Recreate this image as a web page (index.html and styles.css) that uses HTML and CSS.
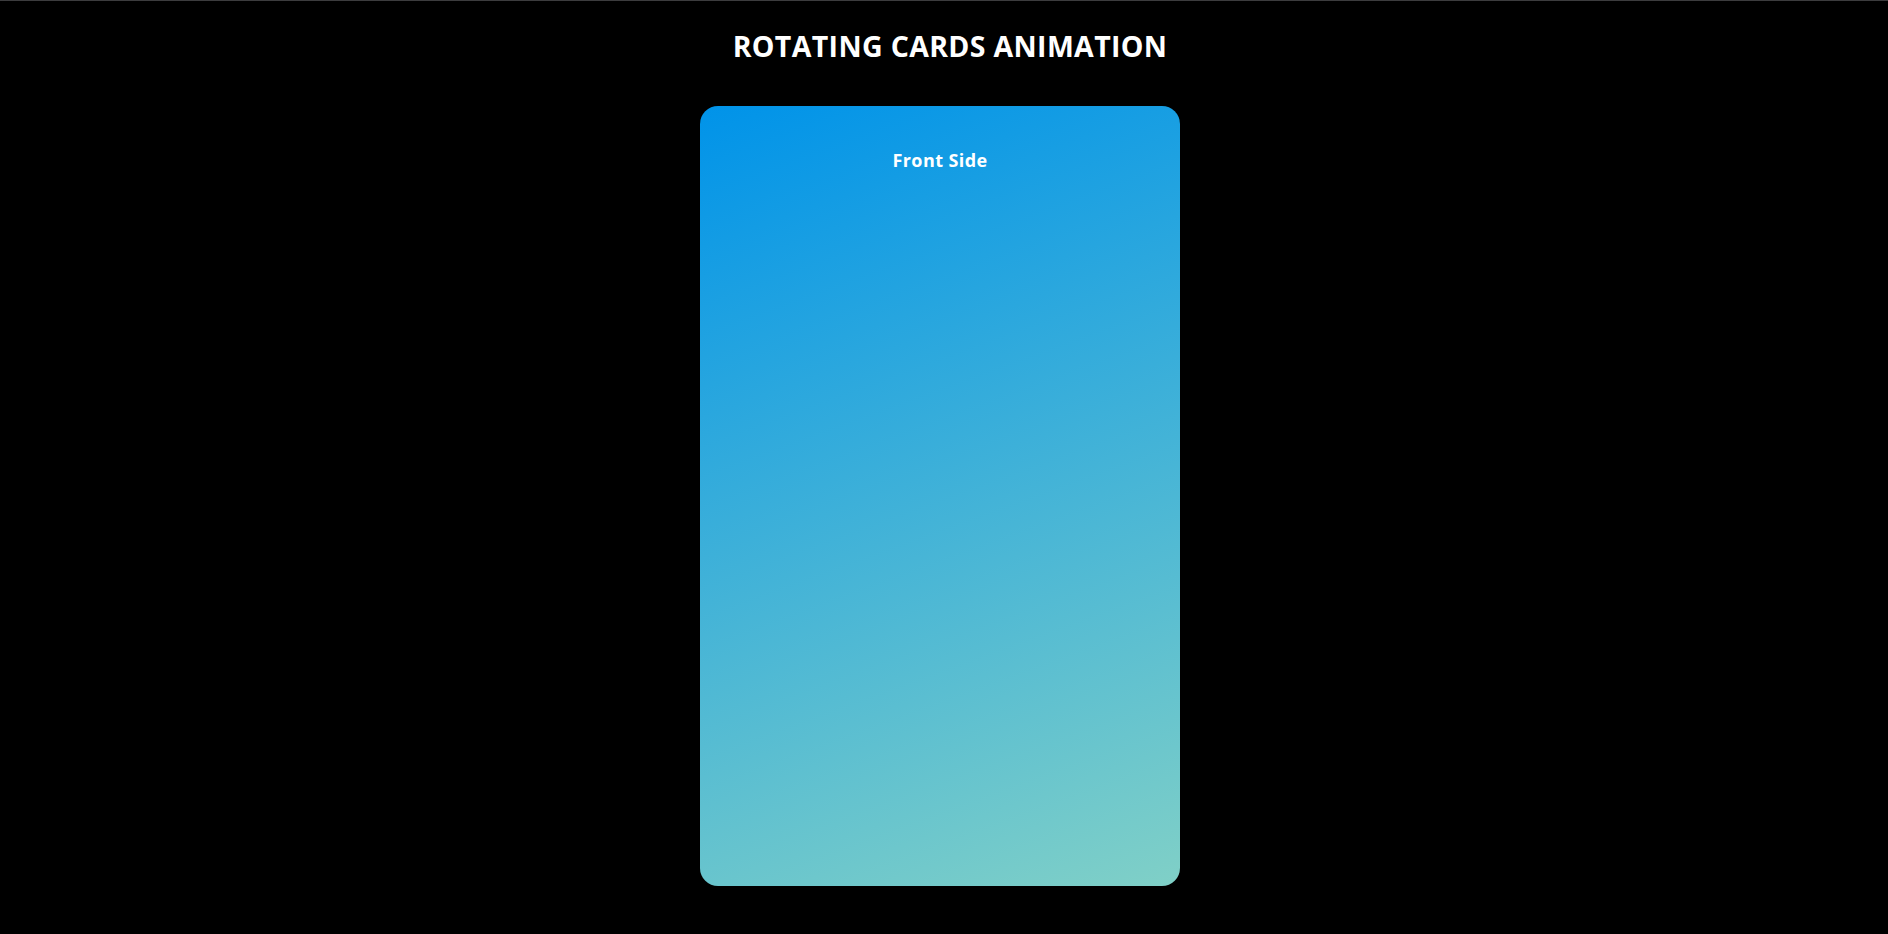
FILE: index.html
```html
<!DOCTYPE html>
<html lang="en">
<head>
<meta charset="utf-8">
<title>Rotating Cards Animation</title>
<link rel="stylesheet" href="styles.css">
</head>
<body>
<main class="page">
  <h1 class="title">ROTATING CARDS ANIMATION</h1>
  <div class="card">
    <h3 class="card-label">Front Side</h3>
  </div>
</main>
</body>
</html>
```
FILE: styles.css
```css
html, body {
  margin: 0;
  padding: 0;
  background: #000;
  height: 100%;
}
body {
  border-top: 1px solid #3c3c3e;
  box-sizing: border-box;
  font-family: "Open Sans", "Noto Sans", sans-serif;
  color: #fff;
  overflow: hidden;
}
.page {
  display: flex;
  flex-direction: column;
  align-items: center;
  padding-right: 8px;
}
.title {
  margin: 0;
  padding-top: 30px;
  margin-left: 20px;
  font-size: 28.5px;
  line-height: 30px;
  font-weight: 700;
  letter-spacing: 0.35px;
}
.card {
  margin-top: 45px;
  width: 480px;
  height: 780px;
  border-radius: 18px;
  background-color: #0093E9;
  background-image: linear-gradient(160deg, #0093E9 0%, #80D0C7 100%);
  display: flex;
  flex-direction: column;
  align-items: center;
}
.card-label {
  margin: 0;
  padding-top: 42px;
  font-size: 18px;
  line-height: 24px;
  font-weight: 700;
  letter-spacing: 0.4px;
}
```
